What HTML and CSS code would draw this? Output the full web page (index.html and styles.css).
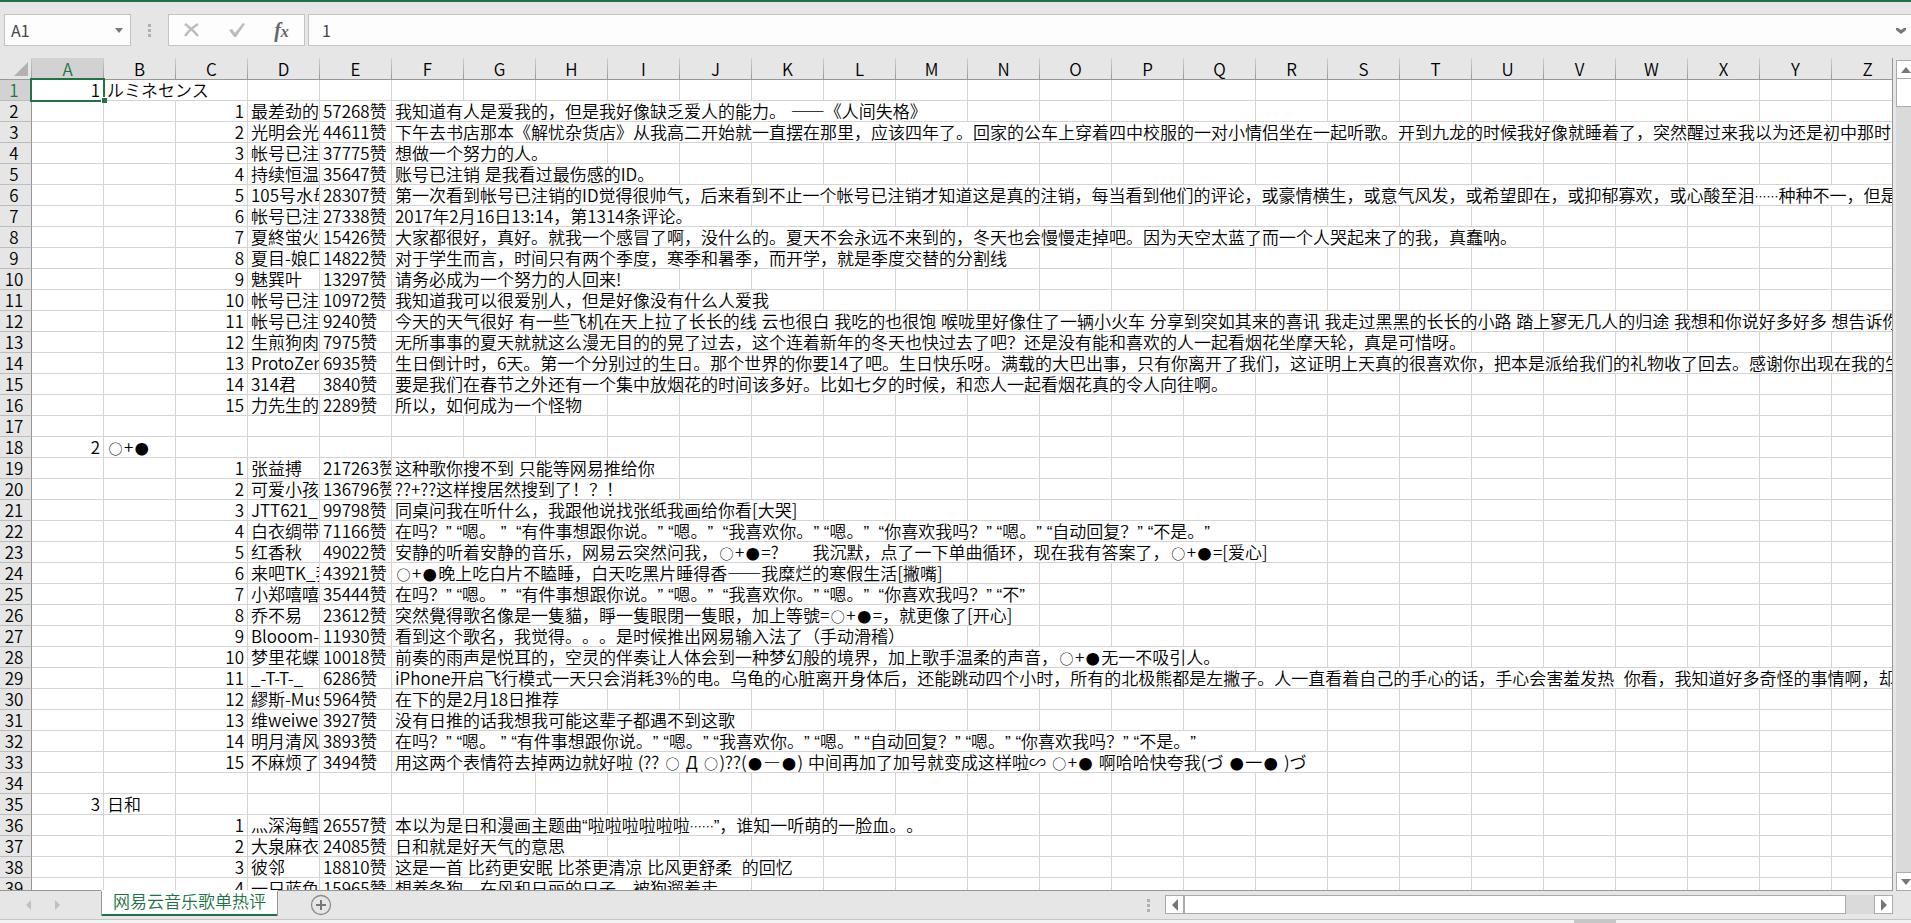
FILE: index.html
```html
<!DOCTYPE html>
<html lang="zh-CN">
<head>
<meta charset="utf-8">
<title>网易云音乐歌单热评</title>
<link rel="stylesheet" href="styles.css">
</head>
<body>
<header class="formula-bar">
  <div class="name-box">
    <input class="name-input" type="text" value="A1" aria-label="名称框">
    <button class="name-toggle" type="button" aria-label="名称列表"><svg width="8" height="5" viewBox="0 0 8 5"><path d="M0 0h8L4 5z" fill="#777"/></svg></button>
  </div>
  <div class="grip"><i></i><i></i><i></i></div>
  <div class="fx-box">
    <button type="button" aria-label="取消"><svg width="18" height="16" viewBox="0 0 18 16"><path d="M2 2C6 5 11 9 15 14M15 2C10 5 5 10 2 14" fill="none" stroke="#bcbcbc" stroke-width="2.4"/></svg></button>
    <button type="button" aria-label="输入"><svg width="18" height="16" viewBox="0 0 18 16"><path d="M1 8L4 7L7 11L15 1L17 2L8 15H6z" fill="#bcbcbc"/></svg></button>
    <button class="fx" type="button" aria-label="插入函数"><span class="fx-f">f</span><span class="fx-x">x</span></button>
  </div>
  <div class="edit-box">
    <input class="edit-input" type="text" value="1" aria-label="编辑栏">
    <button class="edit-toggle" type="button" aria-label="展开编辑栏"><svg width="10" height="7" viewBox="0 0 10 7"><path d="M0 1H2L5 3L8 1H10V3L5 7L0 3z" fill="#777"/></svg></button>
  </div>
</header>

<main class="workspace">
  <div class="grid">
    <table class="sheet">
      <thead><tr id="letters"><th class="corner"><svg width="14" height="14" viewBox="0 0 14 14"><path d="M14 0V14H0z" fill="#b2b2b2"/></svg></th></tr></thead>
      <tbody id="cells"></tbody>
    </table>
  </div>
  <div class="vscroll">
    <button type="button" aria-label="向上滚动"><svg width="10" height="6" viewBox="0 0 10 6"><path d="M5 0L10 6H0z" fill="#777"/></svg></button>
    <div class="vthumb"></div>
    <div class="vtrack"></div>
    <button type="button" aria-label="向下滚动"><svg width="10" height="6" viewBox="0 0 10 6"><path d="M0 0H10L5 6z" fill="#777"/></svg></button>
  </div>
</main>

<footer class="tab-bar">
  <div class="tab-nav">
    <button type="button" aria-label="上一个工作表"><svg width="5" height="10" viewBox="0 0 5 10"><path d="M5 0V10L0 5z" fill="#c0c0c0"/></svg></button>
    <button type="button" aria-label="下一个工作表"><svg width="5" height="10" viewBox="0 0 5 10"><path d="M0 0V10L5 5z" fill="#c0c0c0"/></svg></button>
  </div>
  <button class="tab" type="button">网易云音乐歌单热评</button>
  <button class="add-sheet" type="button" aria-label="新工作表"><svg width="22" height="22" viewBox="0 0 22 22"><circle cx="11" cy="11" r="9.5" fill="none" stroke="#8c8c8c" stroke-width="1.3"/><path d="M11 6V16M6 11H16" stroke="#777" stroke-width="2"/></svg></button>
  <div class="grip grip-low"><i></i><i></i><i></i></div>
  <div class="hscroll">
    <button type="button" aria-label="向左滚动"><svg width="6" height="12" viewBox="0 0 6 12"><path d="M6 0V12L0 6z" fill="#777"/></svg></button>
    <div class="hthumb"></div>
    <div class="htrack"></div>
    <button type="button" aria-label="向右滚动"><svg width="6" height="12" viewBox="0 0 6 12"><path d="M0 0V12L6 6z" fill="#777"/></svg></button>
  </div>
</footer>
<div class="status"><div class="status-mark"></div></div>
<script src="sheet.js"></script>
</body>
</html>
```
FILE: styles.css
```css
* { box-sizing: border-box; }

html { height: 100%; overflow: hidden; }

body {
  margin: 0;
  height: 100%;
  display: flex;
  flex-direction: column;
  overflow: hidden;
  background: #e6e6e6;
  border-top: 2px solid #217346;
  color: #000;
  font-family: "Noto Sans CJK SC", "Noto Sans", sans-serif;
  font-size: 17px;
  font-weight: 350;
  text-spacing-trim: space-all;
}

button, input {
  margin: 0;
  padding: 0;
  border: 0;
  background: none;
  font: inherit;
  color: inherit;
}

button {
  display: flex;
  align-items: center;
  justify-content: center;
}

.formula-bar {
  display: flex;
  height: 56px;
  flex-shrink: 0;
  padding: 12px 0 12px 4px;
}

.name-box, .fx-box, .edit-box {
  display: flex;
  align-items: center;
  background: #fdfdfd;
  border: 1px solid #c3c3c3;
}

.name-box { width: 127px; }

.name-input {
  flex: 1;
  min-width: 0;
  height: 28px;
  padding-left: 6px;
  font-size: 16px;
  font-weight: 400;
  color: #444;
}

.name-toggle { width: 22px; height: 28px; }

.grip {
  width: 37px;
  display: flex;
  flex-direction: column;
  align-items: center;
  justify-content: center;
  gap: 2px;
}

.grip i {
  width: 3px;
  height: 3px;
  background: #b0b0b0;
}

.fx-box {
  width: 137px;
  margin-right: 3px;
}

.fx-box button { flex: 1; height: 28px; }

.fx {
  font-family: "Liberation Serif", serif;
  font-style: italic;
  font-weight: 700;
  color: #666;
}

.fx-f { font-size: 20px; line-height: 24px; }
.fx-x { font-size: 16px; line-height: 24px; padding-top: 4px; }

.edit-box { flex: 1; border-right: 0; }

.edit-input {
  flex: 1;
  height: 28px;
  padding-left: 13px;
  font-size: 16px;
  font-weight: 400;
  color: #444;
}

.edit-toggle { width: 20px; height: 28px; }

.workspace {
  flex: 1;
  min-height: 0;
  display: flex;
  gap: 3px;
}

.grid {
  flex: 1;
  min-width: 0;
  overflow: hidden;
  background: #fff;
  border-right: 1px solid #979797;
  border-bottom: 1px solid #979797;
}

.sheet {
  table-layout: fixed;
  width: 1904px;
  border-collapse: separate;
  border-spacing: 0;
}

.sheet th, .sheet td {
  width: 72px;
  height: 21px;
  padding: 0;
  line-height: 20px;
  font-weight: inherit;
  white-space: pre;
}

.sheet thead th {
  height: 22px;
  line-height: 21px;
  background: #e6e6e6;
  border-right: 1px solid;
  border-bottom: 1px solid #979797;
  border-image: linear-gradient(#d0d0d0, #979797) 1;
}

.sheet .corner {
  width: 32px;
  text-align: right;
  padding-right: 3px;
}

.corner svg { display: block; margin-left: auto; }

.sheet thead .picked, .sheet .picked { background: #d2d2d2; color: #217346; }

.sheet tbody th {
  width: 32px;
  background: #e6e6e6;
  border-right: 1px solid #979797;
  border-bottom: 1px solid #bdbdbd;
  padding-right: 3px;
}

.sheet td {
  border-right: 1px solid #d4d4d4;
  border-bottom: 1px solid #d4d4d4;
  padding-left: 3px;
}

.sheet .number { text-align: right; padding: 0 3px 0 0; }
.sheet .clip { overflow: hidden; }

.spill {
  display: inline-block;
  height: 20px;
  vertical-align: top;
  background: #fff;
}

.latin { font-family: "Liberation Sans", sans-serif; }
.dots { font-size: 12px; }

.disc {
  display: inline-block;
  width: 17px;
  font-size: 14px;
  text-align: center;
}

.sheet .active { position: relative; }

.cursor {
  position: absolute;
  left: -2px;
  top: -2px;
  width: 75px;
  height: 24px;
  border: 2px solid #217346;
}

.handle {
  position: absolute;
  right: -4px;
  bottom: -3px;
  width: 6px;
  height: 6px;
  background: #217346;
  border: solid #fff;
  border-width: 1px 0 0 1px;
}

.vscroll {
  width: 15px;
  padding-top: 2px;
  display: flex;
  flex-direction: column;
  overflow: hidden;
}

.vscroll button {
  width: 20px;
  height: 19px;
  background: #fff;
  border: 1px solid #ababab;
}

.vthumb {
  width: 20px;
  height: 28px;
  background: #fff;
  border: 1px solid #ababab;
  border-top: 0;
}

.vtrack { flex: 1; background: #dadada; }

.tab-bar {
  height: 29px;
  flex-shrink: 0;
  display: flex;
  align-items: flex-start;
  border-bottom: 1px solid #c6c6c6;
  padding-right: 18px;
}

.tab-nav {
  width: 101px;
  height: 27px;
  display: flex;
  gap: 4px;
  padding-left: 16px;
}

.tab-nav button { width: 25px; height: 27px; }

.tab {
  height: 25px;
  padding: 0 11px;
  background: #fff;
  border: solid #979797;
  border-width: 0 1px;
  box-shadow: 0 -1px #fff, inset 0 -2px #217346;
  color: #217346;
  line-height: 20px;
  align-items: flex-start;
  white-space: nowrap;
}

.add-sheet { width: 22px; height: 28px; margin-left: 32px; margin-right: auto; }

.grip-low { width: 34px; height: 28px; }

.hscroll {
  width: 728px;
  height: 19px;
  margin-top: 4px;
  display: flex;
  background: #dadada;
}

.hscroll button {
  width: 19px;
  background: #fff;
  border: 1px solid #ababab;
}

.hthumb {
  flex: 1;
  background: #fff;
  border: 1px solid #ababab;
}

.htrack { width: 28px; }

.status {
  height: 3px;
  flex-shrink: 0;
  background: #f3f3f3;
  display: flex;
  justify-content: flex-end;
  padding-right: 295px;
}

.status-mark { width: 42px; background: #c6c6c6; }
```
FILE: sheet.js
```js
const rows = [
  { a: 1, b: "ルミネセンス" },
  { c: 1, d: "最差劲的", e: "57268赞", f: "我知道有人是爱我的，但是我好像缺乏爱人的能力。 ——《人间失格》" },
  { c: 2, d: "光明会光", e: "44611赞", f: "下午去书店那本《解忧杂货店》从我高二开始就一直摆在那里，应该四年了。回家的公车上穿着四中校服的一对小情侣坐在一起听歌。开到九龙的时候我好像就睡着了，突然醒过来我以为还是初中那时" },
  { c: 3, d: "帐号已注", e: "37775赞", f: "想做一个努力的人。" },
  { c: 4, d: "持续恒温", e: "35647赞", f: "账号已注销 是我看过最伤感的ID。" },
  { c: 5, d: "105号水母", e: "28307赞", f: "第一次看到帐号已注销的ID觉得很帅气，后来看到不止一个帐号已注销才知道这是真的注销，每当看到他们的评论，或豪情横生，或意气风发，或希望即在，或抑郁寡欢，或心酸至泪……种种不一，但是" },
  { c: 6, d: "帐号已注", e: "27338赞", f: "2017年2月16日13:14，第1314条评论。" },
  { c: 7, d: "夏終蛍火", e: "15426赞", f: "大家都很好，真好。就我一个感冒了啊，没什么的。夏天不会永远不来到的，冬天也会慢慢走掉吧。因为天空太蓝了而一个人哭起来了的我，真蠢呐。" },
  { c: 8, d: "夏目-娘口", e: "14822赞", f: "对于学生而言，时间只有两个季度，寒季和暑季，而开学，就是季度交替的分割线" },
  { c: 9, d: "魅巽叶", e: "13297赞", f: "请务必成为一个努力的人回来!" },
  { c: 10, d: "帐号已注", e: "10972赞", f: "我知道我可以很爱别人，但是好像没有什么人爱我" },
  { c: 11, d: "帐号已注", e: "9240赞", f: "今天的天气很好 有一些飞机在天上拉了长长的线 云也很白 我吃的也很饱 喉咙里好像住了一辆小火车 分享到突如其来的喜讯 我走过黑黑的长长的小路 踏上寥无几人的归途 我想和你说好多好多 想告诉你" },
  { c: 12, d: "生煎狗肉", e: "7975赞", f: "无所事事的夏天就就这么漫无目的的晃了过去，这个连着新年的冬天也快过去了吧？还是没有能和喜欢的人一起看烟花坐摩天轮，真是可惜呀。" },
  { c: 13, d: "ProtoZero", e: "6935赞", f: "生日倒计时，6天。第一个分别过的生日。那个世界的你要14了吧。生日快乐呀。满载的大巴出事，只有你离开了我们，这证明上天真的很喜欢你，把本是派给我们的礼物收了回去。感谢你出现在我的生" },
  { c: 14, d: "314君", e: "3840赞", f: "要是我们在春节之外还有一个集中放烟花的时间该多好。比如七夕的时候，和恋人一起看烟花真的令人向往啊。" },
  { c: 15, d: "力先生的", e: "2289赞", f: "所以，如何成为一个怪物" },
  {},
  { a: 2, b: "○+●" },
  { c: 1, d: "张益搏", e: "217263赞", f: "这种歌你搜不到 只能等网易推给你" },
  { c: 2, d: "可爱小孩", e: "136796赞", f: "??+??这样搜居然搜到了！？！" },
  { c: 3, d: "JTT621_", e: "99798赞", f: "同桌问我在听什么，我跟他说找张纸我画给你看[大哭]" },
  { c: 4, d: "白衣绸带", e: "71166赞", f: "在吗？” “嗯。 ”  “有件事想跟你说。” “嗯。”  “我喜欢你。” “嗯。”  “你喜欢我吗？” “嗯。” “自动回复？” “不是。”" },
  { c: 5, d: "红香秋", e: "49022赞", f: "安静的听着安静的音乐，网易云突然问我，○+●=?　　我沉默，点了一下单曲循环，现在我有答案了，○+●=[爱心]" },
  { c: 6, d: "来吧TK_我", e: "43921赞", f: "○+●晚上吃白片不瞌睡，白天吃黑片睡得香——我糜烂的寒假生活[撇嘴]" },
  { c: 7, d: "小郑嘻嘻", e: "35444赞", f: "在吗？” “嗯。 ”  “有件事想跟你说。” “嗯。”  “我喜欢你。” “嗯。”  “你喜欢我吗？” “不”" },
  { c: 8, d: "乔不易", e: "23612赞", f: "突然覺得歌名像是一隻貓，睜一隻眼閉一隻眼，加上等號=○+●=，就更像了[开心]" },
  { c: 9, d: "Blooom-", e: "11930赞", f: "看到这个歌名，我觉得。。。是时候推出网易输入法了（手动滑稽）" },
  { c: 10, d: "梦里花蝶", e: "10018赞", f: "前奏的雨声是悦耳的，空灵的伴奏让人体会到一种梦幻般的境界，加上歌手温柔的声音，○+●无一不吸引人。" },
  { c: 11, d: "_-T-T-_", e: "6286赞", f: "iPhone开启飞行模式一天只会消耗3%的电。乌龟的心脏离开身体后，还能跳动四个小时，所有的北极熊都是左撇子。人一直看着自己的手心的话，手心会害羞发热  你看，我知道好多奇怪的事情啊，却永" },
  { c: 12, d: "繆斯-Muse", e: "5964赞", f: "在下的是2月18日推荐" },
  { c: 13, d: "维weiwei", e: "3927赞", f: "没有日推的话我想我可能这辈子都遇不到这歌" },
  { c: 14, d: "明月清风", e: "3893赞", f: "在吗？” “嗯。 ” “有件事想跟你说。” “嗯。” “我喜欢你。” “嗯。” “自动回复？” “嗯。” “你喜欢我吗？” “不是。”" },
  { c: 15, d: "不麻烦了", e: "3494赞", f: "用这两个表情符去掉两边就好啦 (?? ○ Д ○)??(●—●) 中间再加了加号就变成这样啦∽ ○+● 啊哈哈快夸我(づ ●一● )づ" },
  {},
  { a: 3, b: "日和" },
  { c: 1, d: "灬深海鳕", e: "26557赞", f: "本以为是日和漫画主题曲“啦啦啦啦啦啦……”，谁知一听萌的一脸血。。" },
  { c: 2, d: "大泉麻衣", e: "24085赞", f: "日和就是好天气的意思" },
  { c: 3, d: "彼邻", e: "18810赞", f: "这是一首 比药更安眠 比茶更清凉 比风更舒柔  的回忆" },
  { c: 4, d: "一只蓝色", e: "15965赞", f: "想养条狗，在风和日丽的日子，被狗遛着走" }
];

const letters = "ABCDEFGHIJKLMNOPQRSTUVWXYZ".split("");
const head = document.getElementById("letters");
letters.forEach((letter, i) => {
  const th = document.createElement("th");
  th.scope = "col";
  th.textContent = letter;
  if (i === 0) th.className = "picked";
  head.append(th);
});

// Curly quotes, spaces, ellipses and discs get their own widths.
function fill(el, text) {
  text.split(/([“” ]+|…+|[○●])/).forEach(part => {
    if (!part) return;
    let name = "";
    if (/^[“” ]/.test(part)) name = "latin";
    else if (part[0] === "…") name = "dots";
    else if (/^[○●]/.test(part)) name = "disc";
    if (name) {
      const span = document.createElement("span");
      span.className = name;
      span.textContent = part;
      el.append(span);
    } else {
      el.append(part);
    }
  });
}

const body = document.getElementById("cells");
rows.forEach((row, r) => {
  const tr = document.createElement("tr");
  const th = document.createElement("th");
  th.scope = "row";
  th.textContent = r + 1;
  if (r === 0) th.className = "picked";
  tr.append(th);
  letters.forEach((letter, c) => {
    const td = document.createElement("td");
    const value = row[letter.toLowerCase()];
    if (value !== undefined) {
      if (letter === "B" || letter === "F") {
        const span = document.createElement("span");
        span.className = "spill";
        fill(span, value);
        td.append(span);
      } else {
        td.className = typeof value === "number" ? "number" : "clip";
        fill(td, String(value));
      }
    }
    if (r === 0 && c === 0) {
      td.classList.add("active");
      const cursor = document.createElement("div");
      cursor.className = "cursor";
      const handle = document.createElement("div");
      handle.className = "handle";
      cursor.append(handle);
      td.append(cursor);
    }
    tr.append(td);
  });
  body.append(tr);
});
```
